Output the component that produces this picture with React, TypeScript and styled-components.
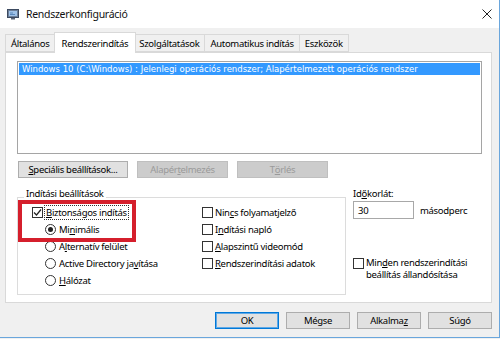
import styled, { createGlobalStyle } from 'styled-components';

const GlobalStyle = createGlobalStyle`
  html, body {
    margin: 0;
    padding: 0;
    background: #f0f0f0;
  }
  body {
    font-family: "Noto Sans", "Open Sans", sans-serif;
  }
`;

const Window = styled.div`
  width: 500px;
  height: 338px;
  box-sizing: border-box;
  display: flex;
  flex-direction: column;
  background: #f0f0f0;
  border-right: 1px solid #6aa6dc;
  border-bottom: 1px solid #6aa6dc;
  font-size: 9.5px;
  letter-spacing: -0.3px;
  color: #000;
  overflow: hidden;
`;

const TitleBar = styled.div`
  height: 28px;
  flex: none;
  display: flex;
  align-items: center;
  padding-left: 7px;
  background: #fff;
`;

const TitleText = styled.span`
  margin-left: 7px;
  font-size: 10.5px;
  color: #111;
`;

const CloseGlyph = styled.svg`
  margin-left: auto;
  margin-right: 7px;
`;

const Body = styled.div`
  flex: 1;
  display: flex;
  flex-direction: column;
  padding: 4px 7px 0 5px;
`;

const TabStrip = styled.div`
  display: flex;
  align-items: flex-end;
  height: 20px;
`;

const Tab = styled.div<{ $active?: boolean }>`
  position: relative;
  box-sizing: border-box;
  display: flex;
  align-items: center;
  padding: 0 ${({ $active }) => ($active ? '7px' : '5px')};
  height: ${({ $active }) => ($active ? '21px' : '18px')};
  margin: 0 ${({ $active }) => ($active ? '-2px' : '0')} ${({ $active }) => ($active ? '-1px' : '0')};
  background: ${({ $active }) => ($active ? '#fff' : '#f0f0f0')};
  border: 1px solid #d9d9d9;
  border-bottom: ${({ $active }) => ($active ? 'none' : '1px solid #d9d9d9')};
  border-left-width: ${({ $active }) => ($active ? '1px' : '0')};
  z-index: ${({ $active }) => ($active ? 2 : 1)};
  white-space: nowrap;

  &:first-child {
    border-left-width: 1px;
  }
`;

const Panel = styled.div`
  box-sizing: border-box;
  height: 251px;
  background: #fff;
  border: 1px solid #d9d9d9;
  padding: 8px 9px 0 11px;
  display: flex;
  flex-direction: column;
`;

const ListBox = styled.div`
  box-sizing: border-box;
  width: 465px;
  height: 93px;
  border: 1px solid #a5a5a5;
  padding: 1px;
  background: #fff;
`;

const ListItem = styled.div<{ $selected?: boolean }>`
  height: 12px;
  line-height: 12px;
  padding-left: 3px;
  font-family: "DejaVu Sans", "Liberation Sans", sans-serif;
  font-size: 8.5px;
  letter-spacing: 0;
  white-space: nowrap;
  background: ${({ $selected }) => ($selected ? '#3399ff' : 'transparent')};
  color: ${({ $selected }) => ($selected ? '#fff' : '#000')};
`;

const ButtonRow = styled.div`
  display: flex;
  gap: 9px;
  margin: 7px 0 0 1px;
`;

const Button = styled.div<{ $w: number; $disabled?: boolean; $default?: boolean }>`
  box-sizing: border-box;
  width: ${({ $w }) => $w}px;
  height: 17px;
  display: flex;
  align-items: center;
  justify-content: center;
  background: ${({ $disabled }) => ($disabled ? '#cccccc' : '#e1e1e1')};
  border: 1px solid
    ${({ $disabled, $default }) => ($default ? '#0078d7' : $disabled ? '#bfbfbf' : '#adadad')};
  box-shadow: ${({ $default }) => ($default ? 'inset 0 0 0 1px #5fa8e6' : 'none')};
  color: ${({ $disabled }) => ($disabled ? '#9a9a9a' : '#000')};
  white-space: nowrap;
`;

const Accel = styled.span`
  text-decoration: underline;
  text-underline-offset: 1px;
`;

const LowerRow = styled.div`
  display: flex;
  gap: 7px;
  margin-top: 9px;
`;

const Group = styled.div`
  position: relative;
  box-sizing: border-box;
  width: 329px;
  height: 98px;
  margin-top: 10px;
  border: 1px solid #dcdcdc;
  padding: 6px 0 0 14px;
  display: grid;
  grid-template-columns: 170px 1fr;
`;

const GroupLabel = styled.span`
  position: absolute;
  top: -11px;
  left: 6px;
  padding: 0 2px;
  background: #fff;
`;

const Highlight = styled.div`
  position: absolute;
  left: 0;
  top: 2px;
  width: 118px;
  height: 42px;
  box-sizing: border-box;
  border: 4px solid #d51f2c;
  pointer-events: none;
`;

const Column = styled.div`
  display: flex;
  flex-direction: column;
`;

const OptionRow = styled.div<{ $indent?: number }>`
  display: flex;
  align-items: center;
  height: 17px;
  padding-left: ${({ $indent }) => $indent ?? 0}px;
  white-space: nowrap;
`;

const Box = styled.span`
  box-sizing: border-box;
  width: 11px;
  height: 11px;
  flex: none;
  border: 1px solid #333;
  background: #fff;
  margin-right: 2px;
  display: flex;
  align-items: center;
  justify-content: center;
`;

const Radio = styled.span<{ $on?: boolean }>`
  box-sizing: border-box;
  width: 11px;
  height: 11px;
  flex: none;
  border: 1px solid #333;
  border-radius: 50%;
  background: #fff;
  margin-right: 3px;
  display: flex;
  align-items: center;
  justify-content: center;

  &::after {
    content: '';
    display: ${({ $on }) => ($on ? 'block' : 'none')};
    width: 5px;
    height: 5px;
    border-radius: 50%;
    background: #222;
  }
`;

const Focused = styled.span`
  outline: 1px dotted #333;
  outline-offset: 0;
  padding: 0 1px;
`;

const SideColumn = styled.div`
  display: flex;
  flex-direction: column;
`;

const FieldLabel = styled.div`
  height: 14px;
  line-height: 14px;
`;

const TimeoutRow = styled.div`
  display: flex;
  align-items: center;
  gap: 6px;
`;

const Input = styled.div`
  box-sizing: border-box;
  width: 61px;
  height: 18px;
  border: 1px solid #a8a8a8;
  background: #fff;
  padding-left: 4px;
  display: flex;
  align-items: center;
`;

const PersistRow = styled.div`
  display: flex;
  align-items: flex-start;
  margin-top: 38px;
  line-height: 12px;
`;

const PersistBox = styled(Box)`
  margin-top: 1px;
`;

const Footer = styled.div`
  display: flex;
  justify-content: flex-end;
  gap: 7px;
  margin-top: 9px;
`;

const Check = () => (
  <svg width="9" height="9" viewBox="0 0 9 9">
    <path d="M1 4.5 L3.5 7 L8 1.5" fill="none" stroke="#222" strokeWidth="1.2" />
  </svg>
);

const AppIcon = () => (
  <svg width="12" height="11" viewBox="0 0 12 11">
    <rect x="0.5" y="0.5" width="11" height="8" fill="#6d7f99" stroke="#3c4a60" />
    <rect x="2" y="2" width="8" height="5" fill="#9fc3ea" />
    <path d="M3 4 h3 M3 5.5 h5" stroke="#4a78b0" strokeWidth="0.8" />
    <rect x="4" y="9" width="4" height="1.5" fill="#5a6578" />
  </svg>
);

const App = () => (
  <>
    <GlobalStyle />
    <Window>
      <TitleBar>
        <AppIcon />
        <TitleText>Rendszerkonfiguráció</TitleText>
        <CloseGlyph width="10" height="10" viewBox="0 0 10 10">
          <path d="M0.5 0.5 L9.5 9.5 M9.5 0.5 L0.5 9.5" stroke="#222" strokeWidth="1" />
        </CloseGlyph>
      </TitleBar>
      <Body>
        <TabStrip>
          <Tab>Általános</Tab>
          <Tab $active>Rendszerindítás</Tab>
          <Tab>Szolgáltatások</Tab>
          <Tab>Automatikus indítás</Tab>
          <Tab>Eszközök</Tab>
        </TabStrip>
        <Panel>
          <ListBox>
            <ListItem $selected>
              Windows 10 (C:\Windows) : Jelenlegi operációs rendszer; Alapértelmezett operációs rendszer
            </ListItem>
          </ListBox>
          <ButtonRow>
            <Button $w={110}>
              <Accel>S</Accel>peciális beállítások...
            </Button>
            <Button $w={91} $disabled>
              Alapér<Accel>t</Accel>elmezés
            </Button>
            <Button $w={91} $disabled>
              T<Accel>ö</Accel>rlés
            </Button>
          </ButtonRow>
          <LowerRow>
            <Group>
              <GroupLabel>Indítási beállítások</GroupLabel>
              <Highlight />
              <Column>
                <OptionRow>
                  <Box>
                    <Check />
                  </Box>
                  <Focused>
                    <Accel>B</Accel>iztonságos indítás
                  </Focused>
                </OptionRow>
                <OptionRow $indent={13}>
                  <Radio $on />
                  Mi<Accel>n</Accel>imális
                </OptionRow>
                <OptionRow $indent={13}>
                  <Radio />
                  A<Accel>l</Accel>ternatív felület
                </OptionRow>
                <OptionRow $indent={13}>
                  <Radio />
                  Active Directory ja<Accel>v</Accel>ítása
                </OptionRow>
                <OptionRow $indent={13}>
                  <Radio />
                  <Accel>H</Accel>álózat
                </OptionRow>
              </Column>
              <Column>
                <OptionRow>
                  <Box />
                  Nin<Accel>c</Accel>s folyamatjelző
                </OptionRow>
                <OptionRow>
                  <Box />
                  I<Accel>n</Accel>dítási napló
                </OptionRow>
                <OptionRow>
                  <Box />
                  <Accel>A</Accel>lapszintű videomód
                </OptionRow>
                <OptionRow>
                  <Box />
                  <Accel>R</Accel>endszerindítási adatok
                </OptionRow>
              </Column>
            </Group>
            <SideColumn>
              <FieldLabel>
                Id<Accel>ő</Accel>korlát:
              </FieldLabel>
              <TimeoutRow>
                <Input>30</Input>
                másodperc
              </TimeoutRow>
              <PersistRow>
                <PersistBox />
                <span>
                  Min<Accel>d</Accel>en rendszerindítási
                  <br />
                  beállítás állandósítása
                </span>
              </PersistRow>
            </SideColumn>
          </LowerRow>
        </Panel>
        <Footer>
          <Button $w={64} $default>
            OK
          </Button>
          <Button $w={64}>Mégse</Button>
          <Button $w={64}>
            Alkalma<Accel>z</Accel>
          </Button>
          <Button $w={64}>Súgó</Button>
        </Footer>
      </Body>
    </Window>
  </>
);

export default App;
